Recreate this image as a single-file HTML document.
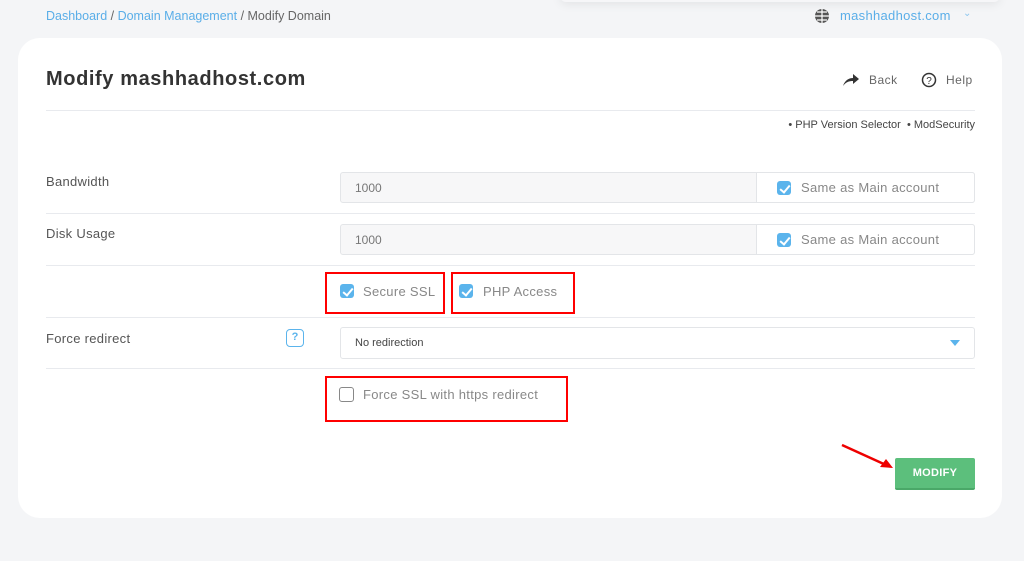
<!DOCTYPE html>
<html><head><meta charset="utf-8"><style>
*{box-sizing:border-box;margin:0;padding:0}
body{width:1024px;height:561px;background:#f4f5f7;font-family:"Liberation Sans",sans-serif;position:relative;overflow:hidden;color:#555}
.a{position:absolute}
.card{left:18px;top:38px;width:984px;height:480px;background:#fff;border-radius:22px}
.line{position:absolute;left:46px;width:929px;height:1px;background:#e8eaee}
.lbl{font-size:13px;color:#555;letter-spacing:.3px}
.inp{left:340px;width:635px;height:31px;border:1px solid #e3e5e8;border-radius:3px;background:#f7f7f8}
.inp .v{position:absolute;left:14px;top:8px;font-size:12px;color:#777}
.inp .s{position:absolute;left:415px;top:-1px;right:-1px;bottom:-1px;background:#fff;border:1px solid #e3e5e8;border-radius:0 3px 3px 0}
.cb{display:inline-block;width:14px;height:14px;border-radius:3px;background:#5bb4ec;position:absolute}
.cb:after{content:"";position:absolute;left:4.5px;top:1.5px;width:4px;height:8px;border:solid #fff;border-width:0 2px 2px 0;transform:rotate(40deg)}
.ct{position:absolute;font-size:13px;color:#888;letter-spacing:.3px}
.red{position:absolute;border:2.5px solid #f00}
</style></head><body>
<div class="a" style="left:560px;top:-10px;width:440px;height:12px;border-radius:10px;box-shadow:0 2px 10px rgba(0,0,0,.08);background:#f6f6f8"></div>
<div class="a" style="left:46px;top:9px;font-size:12.5px;color:#666"><span style="color:#5aaee8">Dashboard</span> / <span style="color:#5aaee8">Domain Management</span> / Modify Domain</div>
<svg class="a" style="left:814px;top:8px" width="16" height="16" viewBox="0 0 16 16"><circle cx="8" cy="8" r="7" fill="#555"/><path d="M1 8h14M8 1v14M3 4h10M3 12h10" stroke="#fff" stroke-width="1.2"/></svg>
<div class="a" style="left:840px;top:8px;font-size:13px;color:#5aaee8;letter-spacing:.3px">mashhadhost.com</div>
<div class="a" style="left:963px;top:8px;font-size:10px;color:#8cc6ee">&#8964;</div>
<div class="a card"></div>
<div class="a" style="left:46px;top:68px;font-size:20px;color:#333;letter-spacing:.6px;font-weight:bold">Modify mashhadhost.com</div>
<svg class="a" style="left:842px;top:72px" width="18" height="16" viewBox="0 0 18 16"><path d="M1 14C3 8 7 6 11 6V2l6 5-6 5V9C7 9 4 10 1 14z" fill="#333"/></svg>
<div class="a" style="left:869px;top:73px;font-size:12px;color:#666;letter-spacing:.5px">Back</div>
<svg class="a" style="left:921px;top:72px" width="16" height="16" viewBox="0 0 16 16"><circle cx="8" cy="8" r="6.5" fill="none" stroke="#333" stroke-width="1.5"/><text x="8" y="12" font-size="10" text-anchor="middle" fill="#333" font-family="Liberation Sans">?</text></svg>
<div class="a" style="left:946px;top:73px;font-size:12px;color:#666;letter-spacing:.5px">Help</div>
<div class="line" style="top:110px"></div>
<div class="a" style="right:49px;top:119px;font-size:11px;color:#444">• PHP Version Selector &nbsp;• ModSecurity</div>
<div class="a lbl" style="left:46px;top:174px">Bandwidth</div>
<div class="a inp" style="top:172px"><span class="v">1000</span><div class="s"><span class="cb" style="left:20px;top:8px"></span><span class="ct" style="left:44px;top:7px">Same as Main account</span></div></div>
<div class="line" style="top:213px"></div>
<div class="a lbl" style="left:46px;top:226px">Disk Usage</div>
<div class="a inp" style="top:224px"><span class="v">1000</span><div class="s"><span class="cb" style="left:20px;top:8px"></span><span class="ct" style="left:44px;top:7px">Same as Main account</span></div></div>
<div class="line" style="top:265px"></div>
<div class="red" style="left:325px;top:272px;width:120px;height:42px"></div>
<span class="cb" style="left:340px;top:284px"></span><span class="ct" style="left:363px;top:284px">Secure SSL</span>
<div class="red" style="left:451px;top:272px;width:124px;height:42px"></div>
<span class="cb" style="left:459px;top:284px"></span><span class="ct" style="left:483px;top:284px">PHP Access</span>
<div class="line" style="top:317px"></div>
<div class="a lbl" style="left:46px;top:331px">Force redirect</div>
<div class="a" style="left:286px;top:329px;width:18px;height:18px;border:1.5px solid #5bb4ec;border-radius:4px;font-size:11px;color:#5bb4ec;text-align:center;line-height:15px;font-weight:bold">?</div>
<div class="a" style="left:340px;top:327px;width:635px;height:32px;border:1px solid #e3e5e8;border-radius:3px;background:#fff"><span style="position:absolute;left:14px;top:9px;font-size:11px;color:#444">No redirection</span><span style="position:absolute;right:14px;top:12px;width:0;height:0;border-left:5px solid transparent;border-right:5px solid transparent;border-top:6px solid #5bb4ec"></span></div>
<div class="line" style="top:368px"></div>
<div class="red" style="left:325px;top:376px;width:243px;height:46px"></div>
<span class="a" style="left:339px;top:387px;width:15px;height:15px;border:1.5px solid #888;border-radius:3px"></span><span class="ct" style="left:363px;top:387px">Force SSL with https redirect</span>
<svg class="a" style="left:838px;top:440px" width="60" height="32" viewBox="0 0 60 32"><path d="M4 5L48 25" stroke="#e00" stroke-width="2.5"/><path d="M55 28L42 27L48 19z" fill="#e00"/></svg>
<div class="a" style="left:895px;top:458px;width:80px;height:32px;background:#5cbf7c;border-radius:2px;border-bottom:2px solid #4aa868;color:#fff;font-size:11px;font-weight:bold;text-align:center;line-height:30px;letter-spacing:.3px">MODIFY</div>
</body></html>
